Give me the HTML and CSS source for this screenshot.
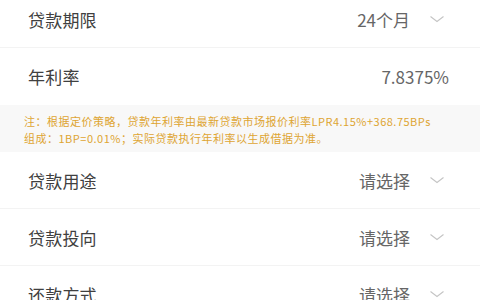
FILE: index.html
```html
<!DOCTYPE html>
<html lang="zh-CN">
<head>
<meta charset="utf-8">
<link rel="stylesheet" href="styles.css">
</head>
<body>
<div class="form">
  <div class="row first">
    <span class="label">贷款期限</span>
    <span class="right"><span class="value">24个月</span><svg class="chev" viewBox="0 0 16 10"><path d="M1.5 2.5 L8 7.5 L14.5 2.5"/></svg></span>
  </div>
  <div class="row rate">
    <span class="label">年利率</span>
    <span class="value">7.8375%</span>
  </div>
  <div class="note">注：根据定价策略，贷款年利率由最新贷款市场报价利率LPR4.15%+368.75BPs<br>组成：1BP=0.01%；实际贷款执行年利率以生成借据为准。</div>
  <div class="row">
    <span class="label">贷款用途</span>
    <span class="right"><span class="value">请选择</span><svg class="chev" viewBox="0 0 16 10"><path d="M1.5 2.5 L8 7.5 L14.5 2.5"/></svg></span>
  </div>
  <div class="row">
    <span class="label">贷款投向</span>
    <span class="right"><span class="value">请选择</span><svg class="chev" viewBox="0 0 16 10"><path d="M1.5 2.5 L8 7.5 L14.5 2.5"/></svg></span>
  </div>
  <div class="row">
    <span class="label">还款方式</span>
    <span class="right"><span class="value">请选择</span><svg class="chev" viewBox="0 0 16 10"><path d="M1.5 2.5 L8 7.5 L14.5 2.5"/></svg></span>
  </div>
</div>
</body>
</html>
```
FILE: styles.css
```css
html, body {
  margin: 0;
  padding: 0;
  background: #ffffff;
  overflow: hidden;
}
body {
  font-family: "Noto Sans CJK SC", "Noto Sans", sans-serif;
  width: 480px;
  height: 300px;
}
.form {
  display: flex;
  flex-direction: column;
}
.row {
  height: 57px;
  box-sizing: border-box;
  display: flex;
  align-items: center;
  justify-content: space-between;
  padding: 0 31px 0 28px;
  border-bottom: 1px solid #f3f3f3;
  flex-shrink: 0;
}
.row.first {
  margin-top: -9px;
}
.row.rate {
  border-bottom: none;
}
.label {
  font-size: 17px;
  color: #404040;
  letter-spacing: 0.2px;
}
.value {
  font-size: 17px;
  color: #666666;
}
.right {
  display: flex;
  align-items: center;
  gap: 19px;
  padding-right: 4px;
}
.chev {
  width: 16px;
  height: 10px;
  fill: none;
  stroke: #c4c4c4;
  stroke-width: 1.1;
}
.note {
  height: 47px;
  box-sizing: border-box;
  background: #f8f8f8;
  padding: 8px 0 0 24px;
  font-size: 11px;
  line-height: 17px;
  letter-spacing: 0.5px;
  color: #dea532;
  white-space: nowrap;
  flex-shrink: 0;
}
```
